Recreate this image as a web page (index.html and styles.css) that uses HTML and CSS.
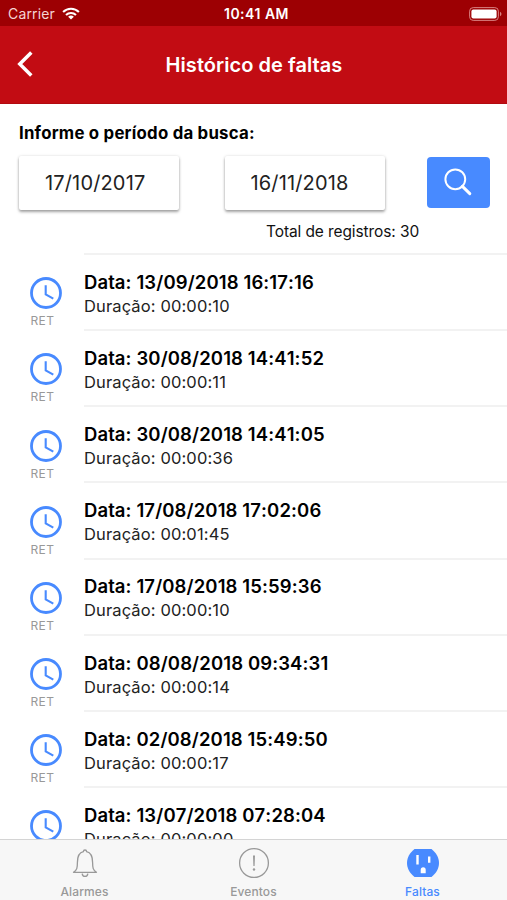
FILE: index.html
```html
<!DOCTYPE html>
<html lang="pt-BR">
<head>
<meta charset="utf-8">
<title>Histórico de faltas</title>
<link rel="stylesheet" href="styles.css">
</head>
<body>
<svg width="0" height="0" class="defs" aria-hidden="true">
  <symbol id="clock" viewBox="0 0 32 32"><circle cx="16" cy="16" r="14.5" fill="none" stroke="currentColor" stroke-width="2.8"/><path d="M15.7 8.300v9.200l7.600 4.200" fill="none" stroke="currentColor" stroke-width="2.100"/></symbol>
</svg>
<div class="app">
  <div class="status">
    <div class="status-left"><span class="carrier">Carrier</span>
      <svg class="wifi" viewBox="0 0 18 13"><g fill="none" stroke="#fff" stroke-width="2.1"><path d="M1.1 4.9a11.3 11.3 0 0 1 15.8 0"/><path d="M4 8a7.2 7.2 0 0 1 10 0"/></g><path d="M9 12.6 6.1 9.8a4.2 4.2 0 0 1 5.8 0z" fill="#fff"/></svg>
    </div>
    <div class="time">10:41 AM</div>
    <div class="status-right">
      <svg class="battery" viewBox="0 0 33 14"><rect x=".6" y=".6" width="28.8" height="12.8" rx="3.6" fill="none" stroke="#d88080" stroke-width="1"/><rect x="2.4" y="2.4" width="25.2" height="9.2" rx="2" fill="#fff"/><path d="M31 4.8q1.5 1 1.5 2.2T31 9.2z" fill="#d88080"/></svg>
    </div>
  </div>
  <header class="header">
    <svg class="back" viewBox="0 0 16 26"><path d="M14.3 1.6 2.8 13l11.5 11.4" fill="none" stroke="#fff" stroke-width="3.5"/></svg>
    <h1 class="title">Histórico de faltas</h1>
  </header>
  <section class="search">
    <div class="label"><span>Informe o período da busca:</span></div>
    <div class="fields">
      <div class="date">17/10/2017</div>
      <div class="date">16/11/2018</div>
      <button class="go" aria-label="Buscar"><svg viewBox="0 0 28 28"><circle cx="11.3" cy="11.3" r="9.9" fill="none" stroke="#fff" stroke-width="2"/><path d="m18.4 18.4 7.4 7.2" stroke="#fff" stroke-width="3" stroke-linecap="round"/></svg></button>
    </div>
    <div class="total">Total de registros: 30</div>
  </section>
  <main class="list">
    <div class="row"><div class="kind"><svg class="clock"><use href="#clock"/></svg><span>RET</span></div><div class="info"><b>Data: 13/09/2018 16:17:16</b><p>Duração: 00:00:10</p></div></div>
    <div class="row"><div class="kind"><svg class="clock"><use href="#clock"/></svg><span>RET</span></div><div class="info"><b>Data: 30/08/2018 14:41:52</b><p>Duração: 00:00:11</p></div></div>
    <div class="row"><div class="kind"><svg class="clock"><use href="#clock"/></svg><span>RET</span></div><div class="info"><b>Data: 30/08/2018 14:41:05</b><p>Duração: 00:00:36</p></div></div>
    <div class="row"><div class="kind"><svg class="clock"><use href="#clock"/></svg><span>RET</span></div><div class="info"><b>Data: 17/08/2018 17:02:06</b><p>Duração: 00:01:45</p></div></div>
    <div class="row"><div class="kind"><svg class="clock"><use href="#clock"/></svg><span>RET</span></div><div class="info"><b>Data: 17/08/2018 15:59:36</b><p>Duração: 00:00:10</p></div></div>
    <div class="row"><div class="kind"><svg class="clock"><use href="#clock"/></svg><span>RET</span></div><div class="info"><b>Data: 08/08/2018 09:34:31</b><p>Duração: 00:00:14</p></div></div>
    <div class="row"><div class="kind"><svg class="clock"><use href="#clock"/></svg><span>RET</span></div><div class="info"><b>Data: 02/08/2018 15:49:50</b><p>Duração: 00:00:17</p></div></div>
    <div class="row"><div class="kind"><svg class="clock"><use href="#clock"/></svg></div><div class="info"><b>Data: 13/07/2018 07:28:04</b><p>Duração: 00:00:00</p></div></div>
  </main>
  <nav class="tabs">
    <div class="tab"><svg viewBox="0 0 32 32"><g fill="none" stroke="#999" stroke-width="1.3" stroke-linejoin="round"><path d="M4.500 25.300c3.500-2 3.900-4.500 3.900-9.800 0-6.500 2.300-10 6-10.800 0-2.300 3.200-2.300 3.200 0 3.700.8 6 4.300 6 10.800 0 5.300.4 7.800 3.900 9.800z"/><path d="M13.200 26.600c.3 3.700 5.300 3.700 5.600 0"/></g></svg><span>Alarmes</span></div>
    <div class="tab"><svg viewBox="0 0 32 32"><circle cx="16" cy="16" r="14.400" fill="none" stroke="#999" stroke-width="1.300"/><path d="M15 8.500h2l-.4 10.500h-1.200z" fill="#999"/><circle cx="16" cy="22.500" r="1.200" fill="#999"/></svg><span>Eventos</span></div>
    <div class="tab active"><svg viewBox="0 0 32 32"><path d="M7.500 2h17C29 5.500 32 10.500 32 16s-3 10.500-7.500 14h-17C3 26.500 0 21.500 0 16S3 5.500 7.500 2z" fill="#488aff"/><path d="M9.300 8h2.400v9.600H9.300zM21 9.600h2.400v6.200H21zM13.700 26.200v-3.400a2.500 2.500 0 0 1 5 0v3.400z" fill="#fff"/></svg><span>Faltas</span></div>
  </nav>
</div>
</body>
</html>
```

FILE: styles.css
```css
* { box-sizing: border-box; }
body { margin: 0; font-family: Inter, "Liberation Sans", sans-serif; color: #111; background: #fff; }
.defs { position: absolute; }
.app { width: 507px; height: 900px; display: flex; flex-direction: column; overflow: hidden; }
.status { height: 26px; flex: none; background: #9d0003; color: #fff; display: grid; grid-template-columns: 1fr auto 1fr; align-items: center; padding: 2px 5px 0 8px; font-size: 14px; line-height: 20px; }
.status-left { display: flex; align-items: center; gap: 7px; margin-top: -1px; }
.carrier { color: #f4d4d4; letter-spacing: .15px; }
.wifi { width: 18px; height: 13px; }
.time { font-weight: 600; letter-spacing: .5px; margin-right: -3px; }
.status-right { display: flex; justify-content: flex-end; margin-top: -1px; }
.battery { width: 33px; height: 14px; }
.header { height: 78px; flex: none; background: #c20c13; border-bottom: 1px solid #b20a10; display: grid; grid-template-columns: 34px 1fr 34px; align-items: center; color: #fff; }
.back { width: 16px; height: 26px; margin: -2px 0 0 17px; }
.title { margin: 0; font-size: 20px; font-weight: 600; line-height: 28px; text-align: center; letter-spacing: .05px; padding-left: 1px; }
.search { height: 149px; flex: none; padding: 18px 17px 0 19px; }
.label { height: 22px; font-size: 16.8px; line-height: 22px; font-weight: 700; color: #000; letter-spacing: .23px; }
.fields { display: flex; align-items: flex-start; margin-top: 12px; }
.date { flex: none; width: 160px; height: 54px; margin-right: 45.5px; background: #fff; border-radius: 2px; box-shadow: 0 2px 3px rgba(0,0,0,.35), 0 0 3px rgba(0,0,0,.12); padding-left: 26px; font-size: 20px; line-height: 54px; color: #222; white-space: nowrap; font-kerning: none; letter-spacing: .15px; }
.date + .go { margin-left: -3px; }
.go { flex: none; width: 63px; height: 51px; margin-top: 1px; padding: 0; border: 0; border-radius: 4px; background: #488aff; display: flex; align-items: center; justify-content: center; }
.go svg { width: 28px; height: 28px; margin-top: -1px; margin-right: 1px; }
.total { margin: 11px 0 0 247px; height: 22px; font-size: 15.5px; line-height: 22px; white-space: nowrap; letter-spacing: -.1px; }
.list { flex: 1; min-height: 0; overflow: hidden; }
.row { height: 76.15px; display: flex; }
.kind { width: 84px; flex: none; padding: 24.3px 0 0 30px; }
.clock { display: block; width: 32px; height: 32px; color: #488aff; }
.kind span { display: block; margin-top: 4px; font-size: 12px; line-height: 15px; color: #999; letter-spacing: .4px; padding-left: .5px; }
.info { flex: 1; border-top: 2px solid #f2f2f2; padding-top: 14.9px; white-space: nowrap; font-kerning: none; }
.info b { display: block; font-size: 18.5px; font-weight: 600; line-height: 25px; color: #000; letter-spacing: .12px; }
.info p { margin: 0; font-size: 16.5px; line-height: 23px; color: #222; letter-spacing: .14px; }
.tabs { height: 61px; flex: none; background: #f7f7f7; border-top: 1px solid #d4d4d4; display: grid; grid-template-columns: repeat(3, 1fr); }
.tab { display: flex; flex-direction: column; align-items: center; padding-top: 7px; font-size: 12px; color: #999; }
.tab svg { width: 32px; height: 32px; }
.tab span { margin-top: 5px; line-height: 15px; font-weight: 500; letter-spacing: .1px; }
.active { color: #488aff; }
```
